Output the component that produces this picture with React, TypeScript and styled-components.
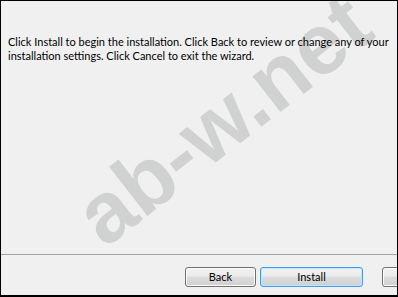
import React from "react";
import styled, { createGlobalStyle } from "styled-components";

const Global = createGlobalStyle`
  html, body { margin: 0; padding: 0; background: #f0f0f0; }
  body { width: 398px; height: 297px; overflow: hidden; }
`;

const Frame = styled.div`
  position: relative;
  box-sizing: border-box;
  width: 398px;
  height: 297px;
  border-top: 1px solid #000;
  border-left: 1px solid #000;
  border-right: 1px solid #000;
  border-bottom: 2px solid #000;
  background: #f0f0f0;
  display: flex;
  flex-direction: column;
  overflow: hidden;
  font-family: "Lato", "Noto Sans", sans-serif;
`;

const Body = styled.div`
  position: relative;
  flex: 1;
  padding: 34px 8px 0 7px;
`;

const Message = styled.p`
  margin: 0;
  font-size: 11px;
  line-height: 14px;
  color: #000;
  white-space: nowrap;
`;

const Separator = styled.div`
  height: 1px;
  background: #a0a0a0;
`;

const ButtonRow = styled.div`
  display: flex;
  align-items: flex-start;
  height: 40px;
  padding: 12px 0 0 184px;
  box-sizing: border-box;
  white-space: nowrap;
`;

const Button = styled.button<{ $width: number; $default?: boolean; $gap: number }>`
  flex: none;
  box-sizing: border-box;
  width: ${(p) => p.$width}px;
  height: 20px;
  margin-right: ${(p) => p.$gap}px;
  padding: 0;
  border: 1px solid ${(p) => (p.$default ? "#3c9ef0" : "#707070")};
  border-radius: 3px;
  background: linear-gradient(
    to bottom,
    #f2f2f2 0%,
    #ebebeb 45%,
    #dddddd 50%,
    #cfcfcf 100%
  );
  box-shadow: inset 0 0 0 1px ${(p) => (p.$default ? "#bfe6fb" : "#fcfcfc")};
  font-family: "Lato", "Noto Sans", sans-serif;
  font-size: 11px;
  line-height: 16px;
  color: #000;
`;

const Watermark = styled.div`
  position: absolute;
  left: 104px;
  top: 175px;
  font-family: "Liberation Sans", Arial, sans-serif;
  font-weight: bold;
  font-size: 86px;
  line-height: 86px;
  color: #d0d2d2;
  transform: rotate(-38deg);
  transform-origin: 0 73px;
  white-space: nowrap;
  pointer-events: none;
`;

export default function App() {
  return (
    <>
      <Global />
      <Frame>
        <Watermark>ab-w.net</Watermark>
        <Body>
          <Message>
            Click Install to begin the installation. Click Back to review or change any of your
            <br />
            installation settings. Click Cancel to exit the wizard.
          </Message>
        </Body>
        <Separator />
        <ButtonRow>
          <Button $width={71} $gap={4}>Back</Button>
          <Button $width={103} $default $gap={19}>Install</Button>
          <Button $width={75} $gap={0}>Cancel</Button>
        </ButtonRow>
      </Frame>
    </>
  );
}
